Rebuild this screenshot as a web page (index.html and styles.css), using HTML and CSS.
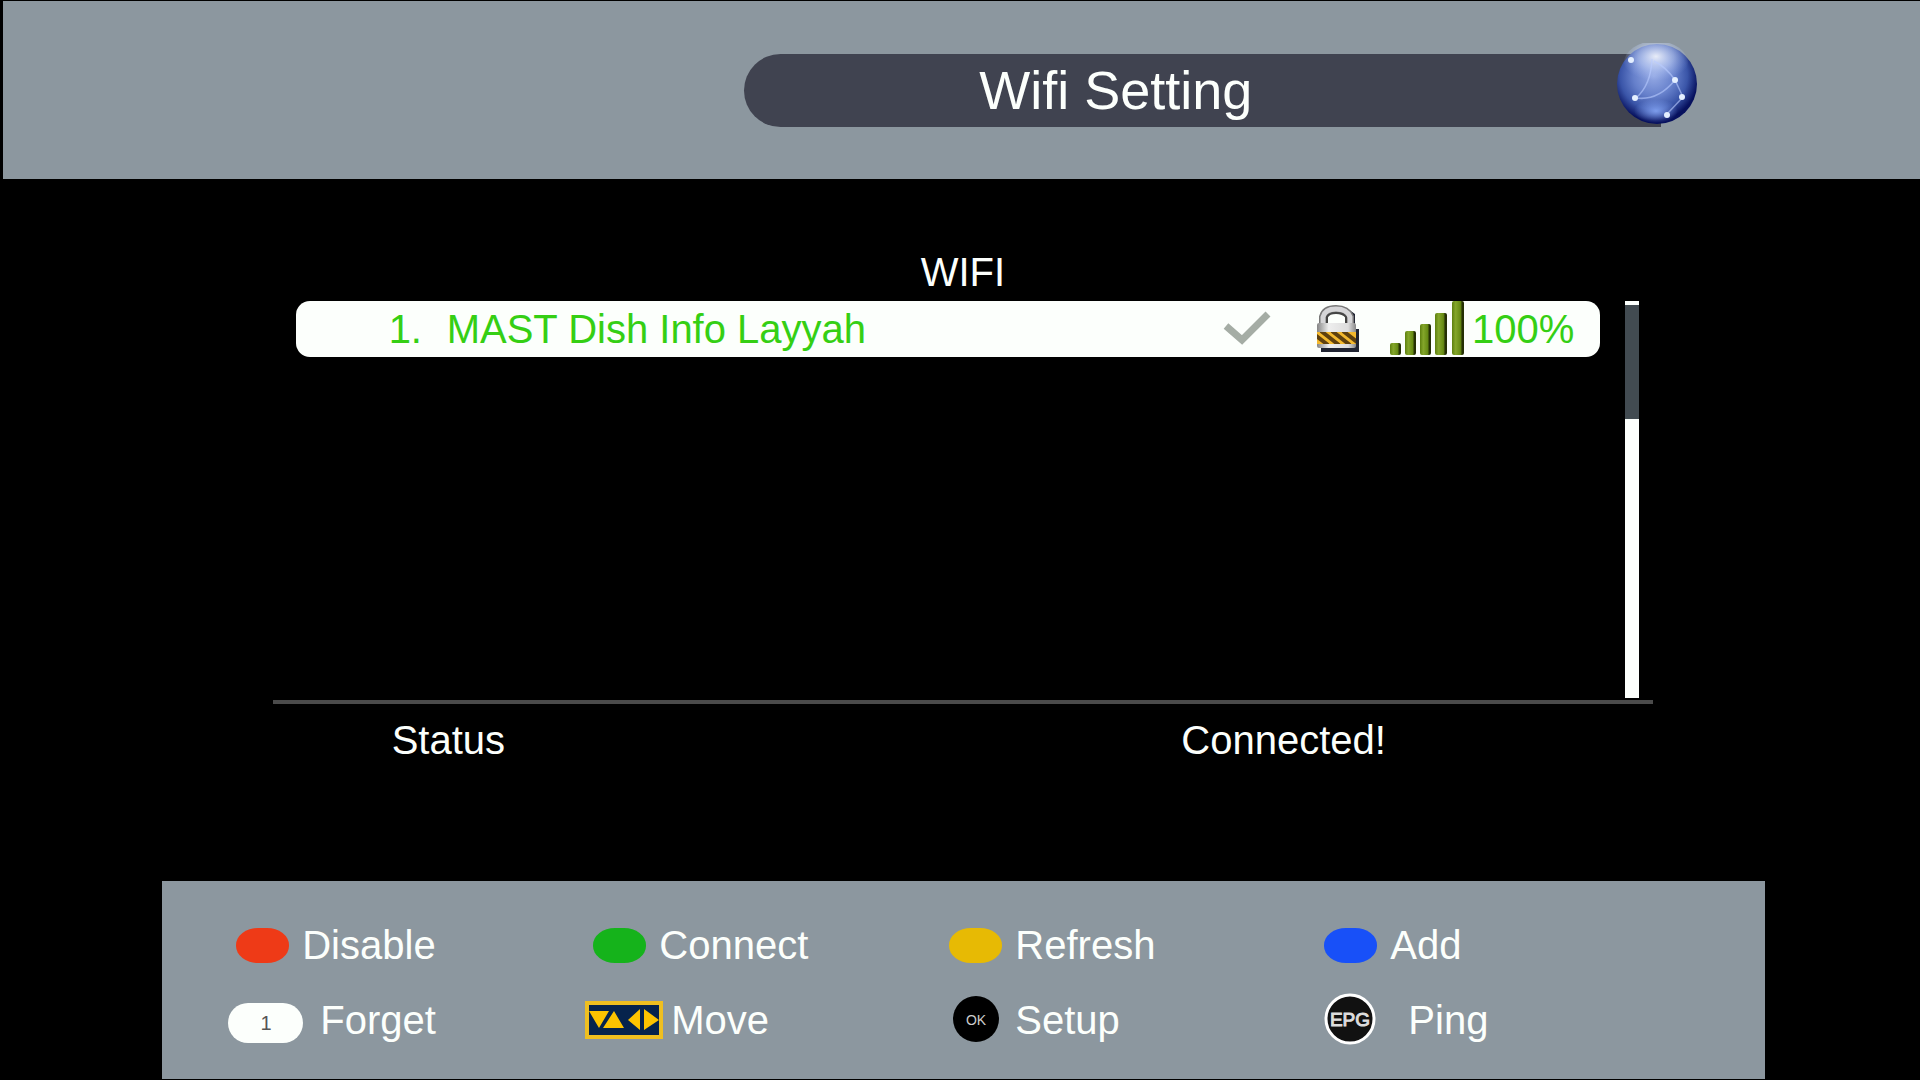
FILE: index.html
```html
<!DOCTYPE html>
<html lang="en">
<head>
<meta charset="utf-8">
<title>Wifi Setting</title>
<link rel="stylesheet" href="styles.css">
</head>
<body>
<header class="top">
  <div class="pill">
    <h1 class="title">Wifi Setting</h1>
    <svg class="globe" viewBox="0 0 82 82" aria-hidden="true">
      <defs>
        <radialGradient id="ball" cx="46%" cy="40%" r="56%">
          <stop offset="0" stop-color="#94a9e4"/>
          <stop offset=".45" stop-color="#6680cb"/>
          <stop offset=".75" stop-color="#3a55a8"/>
          <stop offset="1" stop-color="#07115e"/>
        </radialGradient>
        <radialGradient id="shine" cx="50%" cy="35%" r="55%">
          <stop offset="0" stop-color="#fff" stop-opacity=".85"/>
          <stop offset=".5" stop-color="#d5e2ff" stop-opacity=".5"/>
          <stop offset="1" stop-color="#a9bdf5" stop-opacity="0"/>
        </radialGradient>
        <radialGradient id="glow">
          <stop offset="0" stop-color="#8fb0ff" stop-opacity=".8"/>
          <stop offset="1" stop-color="#8fb0ff" stop-opacity="0"/>
        </radialGradient>
      </defs>
      <circle cx="41" cy="41" r="40" fill="url(#ball)"/>
      <ellipse cx="40" cy="20" rx="32" ry="22" fill="url(#shine)"/>
      <ellipse cx="40" cy="68" rx="22" ry="12" fill="url(#glow)"/>
      <g fill="none" stroke="#b9cbff" stroke-width="1.5" opacity=".6">
        <path d="M36 16Q35 42 20 55Q42 58 59 37Q50 24 38 18M59 37L67 54L51 71"/>
      </g>
      <g fill="#e4efff">
        <circle cx="15" cy="17" r="3"/><circle cx="59" cy="37" r="3"/>
        <circle cx="19" cy="55" r="3"/><circle cx="66" cy="54" r="3"/><circle cx="51" cy="72" r="3"/>
      </g>
    </svg>
  </div>
</header>

<main class="panel">
  <h2 class="heading">WIFI</h2>
  <div class="browser">
    <ol class="networks">
      <li>
        <button class="network" type="button">
          <span>1.</span>
          <span>MAST Dish Info Layyah</span>
          <svg width="48" height="36" viewBox="0 0 48 36" role="img" aria-label="Connected"><path d="M3 15L19 29L45 3" fill="none" stroke="#a5ada5" stroke-width="7"/></svg>
          <svg width="46" height="48" viewBox="0 0 46 48" role="img" aria-label="Secured">
            <defs>
              <linearGradient id="steel" x2="1"><stop offset="0" stop-color="#858585"/><stop offset=".3" stop-color="#eee"/><stop offset=".8" stop-color="#ddd"/><stop offset="1" stop-color="#888"/></linearGradient>
              <clipPath id="band"><path d="M1 27h39v12H1z"/></clipPath>
            </defs>
            <path d="M32 4l7 5v15h4v23H5v-6h31z" fill="#202432"/>
            <path d="M7 22V12Q9 4 20 4T34 12V22" fill="none" stroke="#777" stroke-width="8"/>
            <path d="M7 22V12Q9 4 20 4T34 12V22" fill="none" stroke="#d5d5d7" stroke-width="5"/>
            <path d="M11 19V12Q13 8 20 8T30 12V19z" fill="#fcfffc" stroke="#444" stroke-width="2"/>
            <rect x="1" y="18" width="39" height="25" rx="2" fill="url(#steel)"/>
            <g clip-path="url(#band)">
              <path d="M1 27h39v12H1z" fill="#f4b92e"/>
              <path d="M-6 26L12 40M5 26L23 40M16 26L34 40M27 26L45 40" stroke="#5e400f" stroke-width="4"/>
            </g>
          </svg>
          <svg width="74" height="56" viewBox="0 0 74 56" role="img" aria-label="Signal strength">
            <defs><linearGradient id="leaf" x2="1"><stop offset="0" stop-color="#5d7f0f"/><stop offset=".3" stop-color="#84a62a"/><stop offset=".7" stop-color="#668a14"/><stop offset=".85" stop-color="#253005"/><stop offset="1" stop-color="#253005"/></linearGradient></defs>
            <g fill="url(#leaf)">
              <rect y="42" width="11" height="12" rx="2"/><rect x="15" y="30" width="11" height="24" rx="2"/><rect x="30" y="23" width="11" height="31" rx="2"/><rect x="45" y="12" width="12" height="42" rx="2"/><rect x="62" y="0" width="12" height="54" rx="2"/>
            </g>
          </svg>
          <span>100%</span>
        </button>
      </li>
    </ol>
    <div class="track"><div class="thumb"></div></div>
  </div>
  <dl class="status">
    <dt>Status</dt>
    <dd>Connected!</dd>
  </dl>
</main>

<footer class="keys">
  <button class="key" type="button"><svg width="64" height="36" viewBox="0 0 64 36" aria-hidden="true"><rect x="8" y="1" width="53" height="35" rx="22" ry="17" fill="#ee3a17"/></svg>Disable</button>
  <button class="key" type="button"><svg width="64" height="36" viewBox="0 0 64 36" aria-hidden="true"><rect x="8" y="1" width="53" height="35" rx="22" ry="17" fill="#15b31b"/></svg>Connect</button>
  <button class="key" type="button"><svg width="64" height="36" viewBox="0 0 64 36" aria-hidden="true"><rect x="8" y="1" width="53" height="35" rx="22" ry="17" fill="#e7ba04"/></svg>Refresh</button>
  <button class="key" type="button"><svg width="64" height="36" viewBox="0 0 64 36" aria-hidden="true"><rect x="8" y="1" width="53" height="35" rx="22" ry="17" fill="#1850f8"/></svg>Add</button>
  <button class="key key-wide" type="button"><svg width="76" height="48" viewBox="0 0 76 48" aria-hidden="true"><rect y="7" width="75" height="40" rx="20" fill="#fcfffc"/><text class="cap" x="38" y="34" font-size="20" fill="#555">1</text></svg>Forget</button>
  <button class="key key-move" type="button"><svg width="78" height="38" viewBox="0 0 78 38" aria-hidden="true"><rect x="2" y="2" width="74" height="34" fill="#06234c" stroke="#efbf20" stroke-width="4"/><path d="M4 10H24L14 27zM18 27L29 10L39 27zM43 19L55 8V29zM59 8L74 19L59 29z" fill="#fdc300"/></svg>Move</button>
  <button class="key" type="button"><svg width="64" height="48" viewBox="0 0 64 48" aria-hidden="true"><circle cx="35" cy="23" r="23" fill="#000"/><text class="cap" x="35" y="29" font-size="14" fill="#ccc">OK</text></svg>Setup</button>
  <button class="key key-wide" type="button"><svg width="76" height="54" viewBox="0 0 76 54" aria-hidden="true"><circle cx="34" cy="26" r="24" fill="#111" stroke="#fff" stroke-width="3"/><text class="cap" x="34" y="33" font-size="19" fill="#ddd" stroke="#ddd" stroke-width="1">EPG</text></svg>Ping</button>
</footer>
</body>
</html>
```
FILE: styles.css
```css
* { box-sizing: border-box; }

body {
  display: flex;
  flex-direction: column;
  min-height: 100vh;
  margin: 0;
  padding: 1px 0;
  background: #000;
  color: #fcfffc;
  font: 40px/48px "Liberation Sans", Arial, sans-serif;
}

h1, h2, ol, dl, dd { margin: 0; padding: 0; font-weight: 400; }

button {
  border: 0;
  padding: 0;
  background: none;
  color: inherit;
  font: inherit;
  text-align: left;
}

svg { display: block; flex: none; }

.top {
  margin-left: 3px;
  padding: 53px 0 52px 38.6%;
  background: #8c979f;
}

.pill {
  position: relative;
  width: 78%;
  height: 73px;
  padding-left: 20%;
  border-radius: 37px 0 0 37px;
  background: #404350;
}

.title {
  font-size: 54px;
  line-height: 73px;
}

.globe {
  position: absolute;
  top: -11px;
  right: -37px;
  width: 82px;
  height: 82px;
}

.panel {
  flex: 1;
  width: 71.9%;
  margin: 0 auto 0 14.2%;
  padding-top: 69px;
}

.heading {
  margin-bottom: 5px;
  font-size: 40px;
  text-align: center;
}

.browser {
  display: flex;
  justify-content: space-between;
  height: 399px;
  padding: 0 14px 2px 23px;
}

.networks {
  flex: 1;
  margin-right: 25px;
  list-style: none;
}

.network {
  display: grid;
  grid-template-columns: 58px 1fr 93px 74px 82px 112px;
  align-items: center;
  width: 100%;
  height: 56px;
  padding: 0 16px 0 93px;
  border-radius: 14px;
  background: #fcfffc;
  color: #35cf14;
}

.track {
  width: 14px;
  padding-top: 4px;
  background: #fcfffc;
}

.thumb {
  height: 29%;
  background: #424b51;
}

.status {
  display: grid;
  grid-template-columns: 62.6% 1fr;
  padding: 12px 0 0 119px;
  border-top: 4px solid #4b4b4b;
}

.keys {
  display: grid;
  grid-template-columns: 357fr 356fr 375fr 449fr;
  grid-auto-rows: 75px;
  width: 83.5%;
  margin-left: 8.45%;
  padding: 26px 0 22px 66px;
  background: #8c979f;
}

.key {
  display: flex;
  align-items: center;
  gap: 10px;
}

.key-wide { gap: 16px; }
.key-move { gap: 8px; }

.cap { text-anchor: middle; }
```
